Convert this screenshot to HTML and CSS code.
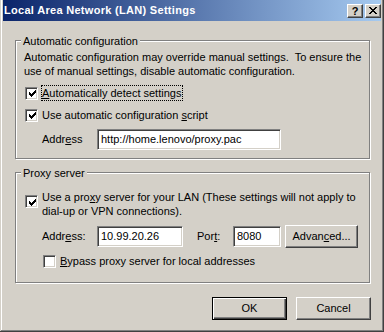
FILE: index.html
```html
<!DOCTYPE html>
<html lang="en">
<head>
<meta charset="utf-8"/>
<title>Local Area Network (LAN) Settings</title>
<link rel="stylesheet" href="styles.css">
</head>
<body>
<div class="window">
  <div class="titlebar">
    <span class="title">Local Area Network (LAN) Settings</span>
    <div class="caption-buttons">
      <span class="cap-btn cap-help">?</span>
      <span class="cap-btn">
        <svg width="8" height="7" viewBox="0 0 8 7" shape-rendering="crispEdges"><path d="M0 0h2v1H0z M6 0h2v1H6z M1 1h2v1H1z M5 1h2v1H5z M2 2h4v1H2z M3 3h2v1H3z M2 4h4v1H2z M1 5h2v1H1z M5 5h2v1H5z M0 6h2v1H0z M6 6h2v1H6z" fill="#000"/></svg>
      </span>
    </div>
  </div>

  <div class="content">
    <div class="group group-auto">
      <div class="group-title">Automatic configuration</div>
      <p class="desc">Automatic configuration may override manual settings.&nbsp; To ensure the<br>use of manual settings, disable automatic configuration.</p>

      <div class="check-row first">
        <span class="check checked"><svg width="7" height="7" viewBox="0 0 7 7" shape-rendering="crispEdges"><path d="M0 2h1v3H0z M1 3h1v3H1z M2 4h1v3H2z M3 3h1v3H3z M4 2h1v3H4z M5 1h1v3H5z M6 0h1v3H6z" fill="#000"/></svg></span>
        <span class="check-label focused"><u>A</u>utomatically detect settings</span>
      </div>
      <div class="check-row">
        <span class="check checked"><svg width="7" height="7" viewBox="0 0 7 7" shape-rendering="crispEdges"><path d="M0 2h1v3H0z M1 3h1v3H1z M2 4h1v3H2z M3 3h1v3H3z M4 2h1v3H4z M5 1h1v3H5z M6 0h1v3H6z" fill="#000"/></svg></span>
        <span class="check-label">Use automatic configuration <u>s</u>cript</span>
      </div>
      <div class="field-row">
        <span class="field-label">Addr<u>e</u>ss</span>
        <span class="textbox wide">http://home.lenovo/proxy.pac</span>
      </div>
    </div>

    <div class="group group-proxy">
      <div class="group-title">Proxy server</div>
      <div class="check-row multi">
        <span class="check checked"><svg width="7" height="7" viewBox="0 0 7 7" shape-rendering="crispEdges"><path d="M0 2h1v3H0z M1 3h1v3H1z M2 4h1v3H2z M3 3h1v3H3z M4 2h1v3H4z M5 1h1v3H5z M6 0h1v3H6z" fill="#000"/></svg></span>
        <span class="check-label">Use a pro<u>x</u>y server for your LAN (These settings will not apply to<br>dial-up or VPN connections).</span>
      </div>
      <div class="field-row proxy-row">
        <span class="field-label">Addr<u>e</u>ss:</span>
        <span class="textbox addr">10.99.20.26</span>
        <span class="port-label">Por<u>t</u>:</span>
        <span class="textbox port">8080</span>
        <span class="btn advanced">Advan<u>c</u>ed...</span>
      </div>
      <div class="check-row bypass">
        <span class="check"></span>
        <span class="check-label"><u>B</u>ypass proxy server for local addresses</span>
      </div>
    </div>

    <div class="footer">
      <span class="btn btn-default">OK</span>
      <span class="btn">Cancel</span>
    </div>
  </div>
</div>
</body>
</html>
```

FILE: styles.css
```css
* {
  box-sizing: border-box;
}
body {
  margin: 0;
  background: #d4d0c8;
  font-family: "Liberation Sans", Arial, sans-serif;
  font-size: 11px;
  line-height: 13px;
  color: #000;
}
u {
  text-decoration: underline;
  text-underline-offset: 1px;
}

/* window frame */
.window {
  width: 384px;
  height: 332px;
  overflow: hidden;
  padding: 0 3px 3px;
  background: #d4d0c8;
  box-shadow: inset -1px -1px #404040, inset 1px 0 #d4d0c8, inset -2px -2px #808080, inset 2px 0 #fff;
}
.titlebar {
  height: 21px;
  display: flex;
  align-items: center;
  justify-content: space-between;
  padding: 0 0 0 1px;
  background: linear-gradient(to right, #0a246a, #a6caf0);
}
.title {
  color: #fff;
  font-weight: bold;
  letter-spacing: 0.3px;
}
.caption-buttons {
  display: flex;
  gap: 2px;
}
.cap-btn {
  width: 16px;
  height: 14px;
  display: flex;
  align-items: center;
  justify-content: center;
  background: #d4d0c8;
  border: 1px solid;
  border-color: #fff #404040 #404040 #fff;
  box-shadow: inset -1px -1px #808080;
}
.cap-help {
  font-weight: bold;
  font-size: 11px;
  line-height: 12px;
}

/* body */
.content {
  padding: 19px 0 0 12px;
}
.group {
  width: 355px;
  border: 1px solid #808080;
  box-shadow: inset 1px 1px #fff, 1px 1px #fff;
  padding: 0 8px 8px;
  white-space: nowrap;
}
.group-title {
  display: table;
  margin: -6px 0 0 -3px;
  padding: 0 2px;
  background: #d4d0c8;
}
.desc {
  margin: 2px 0 0;
  line-height: 14px;
}

.check-row {
  display: flex;
  align-items: center;
  height: 16px;
  margin-top: 6px;
}
.check-row.first {
  margin-top: 7px;
}
.check {
  width: 13px;
  height: 13px;
  margin-left: 1px;
  flex: none;
  display: flex;
  align-items: center;
  justify-content: center;
  background: #fff;
  border: 1px solid;
  border-color: #808080 #fff #fff #808080;
  box-shadow: inset 1px 1px #404040, inset -1px -1px #d4d0c8;
}
.check svg {
  margin: 1px 0 0 1px;
}
.check-label {
  margin-left: 3px;
  padding: 0 1px 0 0;
  border: 1px dotted transparent;
  line-height: 14px;
}
.check-label.focused {
  border-color: #000;
}

.field-row {
  display: flex;
  align-items: center;
  height: 21px;
  margin-top: 6px;
}
.field-label {
  width: 55px;
  margin-left: 18px;
}
.textbox {
  height: 21px;
  display: flex;
  align-items: center;
  padding-left: 3px;
  background: #fff;
  border: 1px solid;
  border-color: #808080 #fff #fff #808080;
  box-shadow: inset 1px 1px #404040, inset -1px -1px #d4d0c8;
}
.textbox.wide {
  width: 184px;
}

.group-proxy {
  margin-top: 13px;
  padding-bottom: 13px;
}
.check-row.multi {
  height: auto;
  align-items: flex-start;
  margin-top: 9px;
}
.check-row.multi .check {
  margin-top: 6px;
}
.proxy-row {
  height: 23px;
  margin-top: 6px;
}
.textbox.addr {
  width: 86px;
}
.port-label {
  width: 36px;
  margin-left: 14px;
}
.textbox.port {
  width: 48px;
}
.check-row.bypass {
  margin-top: 5px;
  padding-left: 18px;
}

/* buttons */
.btn {
  height: 23px;
  display: flex;
  align-items: center;
  justify-content: center;
  background: #d4d0c8;
  border: 1px solid;
  border-color: #fff #404040 #404040 #fff;
  box-shadow: inset -1px -1px #808080;
}
.btn.advanced {
  width: 73px;
  margin-left: 4px;
}
.footer {
  width: 356px;
  display: flex;
  justify-content: flex-end;
  gap: 9px;
  margin-top: 14px;
}
.footer .btn {
  width: 75px;
}
.btn.btn-default {
  border-color: #000;
  box-shadow: inset 1px 1px #fff, inset -1px -1px #404040, inset -2px -2px #808080;
}
```
